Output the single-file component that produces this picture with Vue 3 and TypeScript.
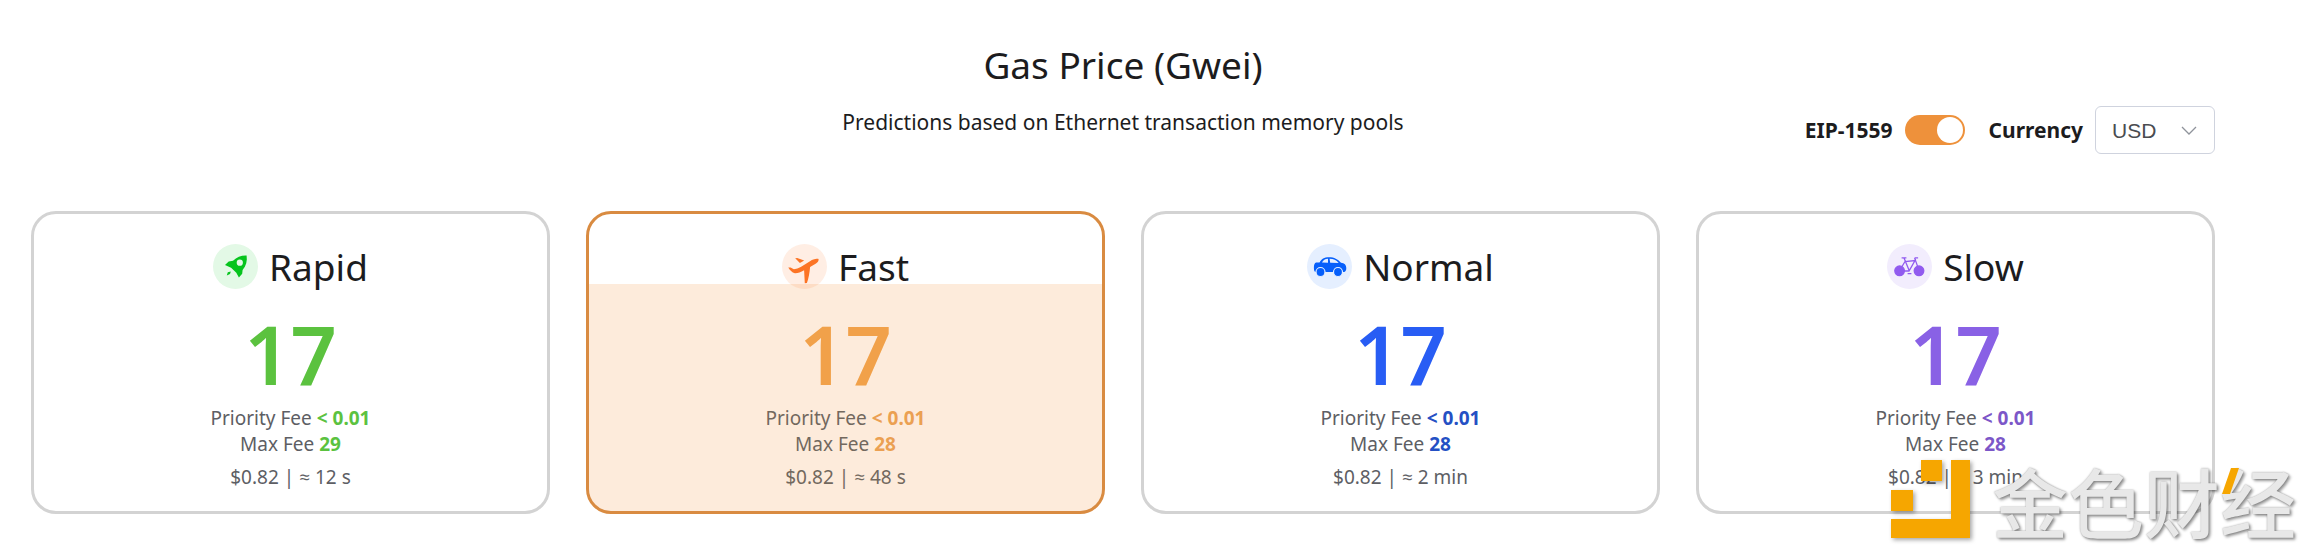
<script setup lang="ts">
import { ref } from 'vue'

type Speed = 'rapid' | 'fast' | 'normal' | 'slow'

interface Tier {
  id: Speed
  label: string
  price: number
  priorityFee: string
  maxFee: number
  cost: string
  wait: string
}

const tiers: Tier[] = [
  { id: 'rapid', label: 'Rapid', price: 17, priorityFee: '< 0.01', maxFee: 29, cost: '$0.82', wait: '≈ 12 s' },
  { id: 'fast', label: 'Fast', price: 17, priorityFee: '< 0.01', maxFee: 28, cost: '$0.82', wait: '≈ 48 s' },
  { id: 'normal', label: 'Normal', price: 17, priorityFee: '< 0.01', maxFee: 28, cost: '$0.82', wait: '≈ 2 min' },
  { id: 'slow', label: 'Slow', price: 17, priorityFee: '< 0.01', maxFee: 28, cost: '$0.82', wait: '≈ 3 min' },
]

const eip1559 = ref(true)
const currency = ref('USD')
</script>

<template>
  <main class="page">
    <header class="header">
      <div class="heading">
        <h1>Gas Price (Gwei)</h1>
        <p>Predictions based on Ethernet transaction memory pools</p>
      </div>
      <div class="controls">
        <label for="eip">EIP-1559</label>
        <input id="eip" v-model="eip1559" class="switch" type="checkbox" role="switch" />
        <label class="currency-label" for="currency">Currency</label>
        <div class="select">
          <select id="currency" v-model="currency">
            <option>USD</option>
            <option>EUR</option>
          </select>
          <svg class="chevron" viewBox="0 0 16 9" aria-hidden="true">
            <path d="M1 1l7 7 7-7" fill="none" stroke="#8f939b" stroke-width="1.3" />
          </svg>
        </div>
      </div>
    </header>

    <section class="cards">
      <article v-for="tier in tiers" :key="tier.id" class="card" :class="tier.id">
        <h2>
          <svg class="icon" viewBox="0 0 45 45" aria-hidden="true">
            <circle class="disc" cx="22.5" cy="22.5" r="22.5" />
            <g v-if="tier.id === 'rapid'" fill="currentColor">
              <path
                fill-rule="evenodd"
                d="M33.6 11.4c.8 5.6-.4 10.400-4 14.600l-.4 3.800-3.300 3.600-2.600-4.600-5.200-5-6.100-2.800 3.700-3.500 4.300-.7c3.900-4 8.200-5.600 13.600-5.400zM26.800 15.600a3.100 3.100 0 1 0 0 6.200 3.100 3.100 0 0 0 0-6.200z"
              />
              <path d="M17.800 27.500l-.8 2.500-3.200 1.400 1-3.100z" />
            </g>
            <g v-else-if="tier.id === 'fast'" fill="currentColor">
              <path
                d="M36.600 15.300c.2 1.900-1 3.200-3 4.400l-5.500 3.200c-.5 5.800-1.500 11.500-3.200 16l-2.100.3-.7-13c-3.400 1.800-6.600 3.200-9.200 3-3-.5-5-3-6.600-5.600l2.300-.2 3.300 1.800c4.800-.3 9-3.300 13.300-6.100 3.400-2.200 6.300-4.500 9.800-4.300 1 0 1.500.1 1.600.5z"
              />
              <path d="M13.200 14.300l2-.4 7 2.600-4.300 2.500z" />
            </g>
            <g v-else-if="tier.id === 'normal'">
              <path
                fill="currentColor"
                fill-rule="evenodd"
                d="M9 18.500h3.500c2-3.500 4.500-5.200 9.500-5.200 5.500 0 8.500 2 12 5.400 3.500.5 5.300 2 5.300 5.300 0 2.500-.8 3.800-2.500 4H9c-1.700-.2-2.100-1.500-2.100-4 0-2.700.4-5 2.100-5.500zM21 14.800c-3 .1-4.800 1.400-6 3.800l6 .2zM22.600 14.800l.6 4 8.500.1c-2.500-2.700-5-4-9.100-4.100z"
              />
              <circle cx="13.500" cy="28" r="4.500" fill="currentColor" stroke="#e5efff" stroke-width="1.2" />
              <circle cx="31" cy="28" r="4.500" fill="currentColor" stroke="#e5efff" stroke-width="1.2" />
            </g>
            <g v-else fill="none" stroke="currentColor" stroke-width="1.300">
              <circle cx="12.600" cy="26.800" r="4.800" fill="currentColor" />
              <circle cx="32" cy="26.800" r="4.800" fill="currentColor" />
              <path
                d="M14.600 13.900h4.800M17 14l5.200 12.500M12.600 26.500l5.400-9 10-1-6 10.500h-5M27.600 13.900h3.500M27.600 13.900l4.400 12.500M20.600 29.600h3.800"
              />
            </g>
          </svg>
          {{ tier.label }}
        </h2>
        <p class="price">{{ tier.price }}</p>
        <p class="fee">Priority Fee <strong>{{ tier.priorityFee }}</strong></p>
        <p class="fee">Max Fee <strong>{{ tier.maxFee }}</strong></p>
        <p class="estimate">{{ tier.cost }} | {{ tier.wait }}</p>
      </article>
    </section>

    <div class="watermark">
      <svg class="mark" viewBox="0 0 79 78" aria-hidden="true">
        <path fill="#f6a600" d="M30 0h21v21H30zM0 30h22v21H0zM60 0h19v78H0V59h60z" />
      </svg>
      <div class="brand">
        金色财经
        <svg class="accent" viewBox="0 0 17 26" aria-hidden="true">
          <path fill="#f6a600" d="M9 0h8L8 26H0z" />
        </svg>
      </div>
    </div>
  </main>
</template>

<style>
body {
  margin: 0;
  background: #fff;
}
</style>

<style scoped>
.page {
  position: relative;
  padding: 41px 93px 41px 31px;
  color: #1c1c1e;
  font-family: "Noto Sans", "Open Sans", sans-serif;
}

h1,
h2,
p {
  margin: 0;
  font-weight: 400;
}

.header {
  display: grid;
  grid-template-columns: 1fr auto 1fr;
  margin-bottom: 57px;
}

.heading {
  grid-column: 2;
  padding-bottom: 17px;
  text-align: center;
}

h1 {
  font-size: 37px;
  line-height: 48px;
}

.heading p {
  margin-top: 18px;
  font-size: 21px;
  line-height: 30px;
}

.controls {
  display: flex;
  align-items: center;
  align-self: end;
  justify-self: end;
  gap: 12px;
  font-size: 21px;
  font-weight: 700;
  line-height: 30px;
}

.currency-label {
  margin-left: 12px;
}

.switch {
  appearance: none;
  width: 60px;
  height: 30px;
  margin: 0;
  padding: 2px;
  box-sizing: border-box;
  border-radius: 15px;
  background: #c4c7cc;
  cursor: pointer;
}

.switch::before {
  content: "";
  display: block;
  width: 26px;
  height: 26px;
  border-radius: 50%;
  background: #fff;
}

.switch:checked {
  background: #ee913b;
}

.switch:checked::before {
  margin-left: auto;
}

.select {
  position: relative;
}

select {
  appearance: none;
  display: block;
  width: 120px;
  height: 48px;
  padding: 0 16px;
  border: 1px solid #cfd3de;
  border-radius: 6px;
  background: #fff;
  color: #4a4c50;
  font-family: "Liberation Sans", Arial, sans-serif;
  font-size: 21px;
}

.chevron {
  position: absolute;
  top: 20px;
  right: 18px;
  width: 16px;
  height: 9px;
  pointer-events: none;
}

.cards {
  display: grid;
  grid-template-columns: repeat(4, 1fr);
  gap: 36px;
}

.card {
  padding: 30px 20px 21px;
  border: 3px solid #d3d3d3;
  border-radius: 25px;
  text-align: center;
}

h2 {
  display: flex;
  justify-content: center;
  gap: 11px;
  font-size: 37px;
  line-height: 45px;
}

.icon {
  width: 45px;
  height: 45px;
}

.price {
  margin: 25px 0 11px;
  font-size: 81px;
  font-weight: 600;
  line-height: 80px;
}

.fee,
.estimate {
  color: #5d5e64;
  font-size: 19px;
  line-height: 26px;
}

.fee strong {
  font-weight: 700;
}

.estimate {
  margin-top: 7px;
}

.rapid .icon {
  color: #06c41d;
}

.rapid .disc {
  fill: #e3f9e6;
}

.rapid .price,
.rapid strong {
  color: #5bc23f;
}

.fast {
  border-color: #d98b41;
  background: linear-gradient(#fff 70px, #fdebdb 70px) padding-box;
}

.fast .icon {
  color: #fc7425;
}

.fast .disc {
  fill: #fc7425;
  fill-opacity: 0.12;
}

.fast .price,
.fast strong {
  color: #f1a14a;
}

.fast .fee,
.fast .estimate {
  color: #72685e;
}

.fast .fee strong {
  color: #eba052;
}

.normal .icon {
  color: #065ffb;
}

.normal .disc {
  fill: #e5efff;
}

.normal .price {
  color: #285df4;
}

.normal strong {
  color: #2450c4;
}

.slow .icon {
  color: #915bef;
}

.slow .disc {
  fill: #f2edfd;
}

.slow .price {
  color: #8961e5;
}

.slow strong {
  color: #7c57c8;
}

.watermark {
  position: absolute;
  right: 12px;
  bottom: 17px;
  display: flex;
  gap: 22px;
  height: 78px;
  pointer-events: none;
}

.mark {
  width: 79px;
  height: 78px;
  filter: drop-shadow(2px 2px 2px rgb(0 0 0 / 35%));
}

.brand {
  position: relative;
  color: #e8e8e8;
  font-family: "Noto Sans CJK SC", sans-serif;
  font-size: 76px;
  font-weight: 500;
  line-height: 80px;
  white-space: nowrap;
  text-shadow: 0 0 2px rgb(0 0 0 / 35%), 2px 2px 3px rgb(0 0 0 / 40%);
}

.accent {
  position: absolute;
  top: 8px;
  right: 57px;
  width: 17px;
  height: 26px;
}
</style>
